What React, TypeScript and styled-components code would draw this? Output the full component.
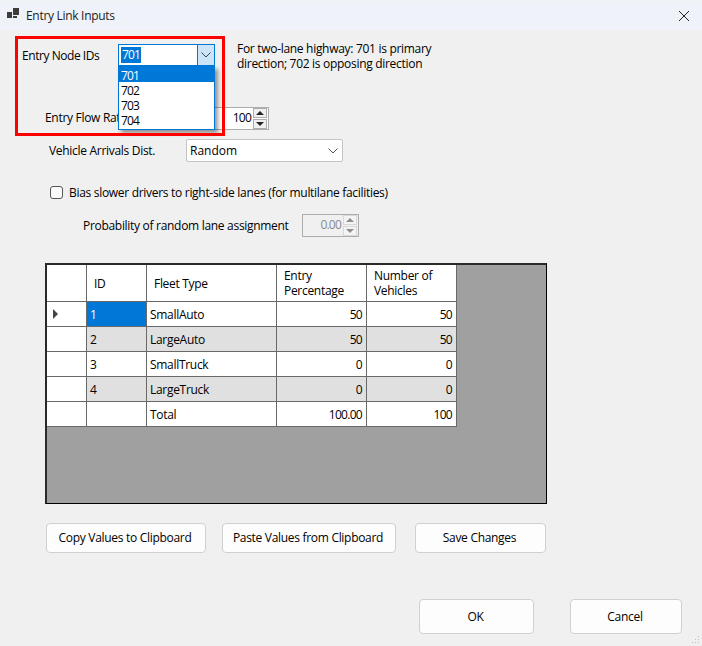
import styled, { createGlobalStyle } from "styled-components";

const rows = [
  { id: "1", type: "SmallAuto", pct: "50", num: "50" },
  { id: "2", type: "LargeAuto", pct: "50", num: "50" },
  { id: "3", type: "SmallTruck", pct: "0", num: "0" },
  { id: "4", type: "LargeTruck", pct: "0", num: "0" },
  { id: "", type: "Total", pct: "100.00", num: "100" },
];

export default function App() {
  return (
    <>
      <GlobalStyle />
      <Dialog>
        <TitleBar>
          <AppIcon viewBox="0 0 12 10">
            <rect x="0" y="4" width="5" height="6" fill="#3c3c3c" />
            <rect x="6" y="0" width="6" height="7" fill="#3c3c3c" />
            <rect x="6" y="8" width="4" height="2" fill="#3c3c3c" />
          </AppIcon>
          <TitleText>Entry Link Inputs</TitleText>
          <CloseIcon viewBox="0 0 12 12">
            <path d="M1 1 L11 11 M11 1 L1 11" stroke="#222" strokeWidth="1" fill="none" />
          </CloseIcon>
        </TitleBar>

        <Body>
          <NodeRow>
            <NodeLabel>Entry Node IDs</NodeLabel>
            <ComboWrap>
              <Combo>
                <ComboValue>
                  <Selected>701</Selected>
                </ComboValue>
                <ComboButton>
                  <Chevron viewBox="0 0 10 6">
                    <path d="M0.5 0.5 L5 5 L9.5 0.5" stroke="#444" fill="none" />
                  </Chevron>
                </ComboButton>
              </Combo>
              <DropList>
                <DropItem $active>701</DropItem>
                <DropItem>702</DropItem>
                <DropItem>703</DropItem>
                <DropItem>704</DropItem>
              </DropList>
            </ComboWrap>
            <HelpText>
              For two-lane highway: 701 is primary
              <br />
              direction; 702 is opposing direction
            </HelpText>
          </NodeRow>

          <FlowRow>
            <FlowLabel $indent={45}>Entry Flow Rate</FlowLabel>
            <Spinner $width={83}>
              <SpinValue>100</SpinValue>
              <SpinButtons />
            </Spinner>
          </FlowRow>

          <ArrivalRow>
            <FieldLabel $indent={49}>Vehicle Arrivals Dist.</FieldLabel>
            <Select>
              <span>Random</span>
              <Chevron viewBox="0 0 10 6">
                <path d="M0.5 0.5 L5 5 L9.5 0.5" stroke="#555" fill="none" />
              </Chevron>
            </Select>
          </ArrivalRow>

          <CheckRow>
            <CheckBox />
            <span>Bias slower drivers to right-side lanes (for multilane facilities)</span>
          </CheckRow>

          <ProbRow>
            <span>Probability of random lane assignment</span>
            <Spinner $width={57} $disabled>
              <SpinValue>0.00</SpinValue>
              <SpinButtons $disabled />
            </Spinner>
          </ProbRow>

          <Grid>
            <Table>
              <colgroup>
                <col width={40} />
                <col width={60} />
                <col width={130} />
                <col width={90} />
                <col width={90} />
              </colgroup>
              <thead>
                <tr>
                  <HeadCell />
                  <HeadCell>ID</HeadCell>
                  <HeadCell>Fleet Type</HeadCell>
                  <HeadCell>
                    Entry
                    <br />
                    Percentage
                  </HeadCell>
                  <HeadCell>
                    Number of
                    <br />
                    Vehicles
                  </HeadCell>
                </tr>
              </thead>
              <tbody>
                {rows.map((r, i) => (
                  <BodyRow key={r.type} $alt={i % 2 === 1}>
                    <RowHeader>{i === 0 && <RowArrow />}</RowHeader>
                    <Cell $current={i === 0}>{r.id}</Cell>
                    <Cell>{r.type}</Cell>
                    <NumCell>{r.pct}</NumCell>
                    <NumCell>{r.num}</NumCell>
                  </BodyRow>
                ))}
              </tbody>
            </Table>
          </Grid>

          <ButtonRow>
            <Button $width={160}>Copy Values to Clipboard</Button>
            <Button $width={174}>Paste Values from Clipboard</Button>
            <SaveButton $width={131}>Save Changes</SaveButton>
          </ButtonRow>

          <Footer>
            <FooterButton $width={115}>OK</FooterButton>
            <FooterButton $width={112}>Cancel</FooterButton>
          </Footer>

          <RedBox />
          <Grip viewBox="0 0 8 8">
            <g fill="#bdbdbd">
              <rect x="6" y="0" width="1" height="1" />
              <rect x="3" y="3" width="1" height="1" />
              <rect x="6" y="3" width="1" height="1" />
              <rect x="0" y="6" width="1" height="1" />
              <rect x="3" y="6" width="1" height="1" />
              <rect x="6" y="6" width="1" height="1" />
            </g>
          </Grip>
        </Body>
      </Dialog>
    </>
  );
}

function SpinButtons({ $disabled }: { $disabled?: boolean }) {
  return (
    <SpinColumn>
      <SpinButton $disabled={$disabled}>
        <SpinUp $disabled={$disabled} />
      </SpinButton>
      <SpinButton $disabled={$disabled}>
        <SpinDown $disabled={$disabled} />
      </SpinButton>
    </SpinColumn>
  );
}

const GlobalStyle = createGlobalStyle`
  html, body {
    margin: 0;
    padding: 0;
    background: #f0f0f0;
  }
  body {
    font-family: "Open Sans", "Noto Sans", sans-serif;
    font-size: 12px;
    letter-spacing: -0.3px;
    color: #000;
  }
`;

const Dialog = styled.div`
  width: 702px;
  height: 646px;
  display: flex;
  flex-direction: column;
  background: #f0f0f0;
  overflow: hidden;
`;

const TitleBar = styled.div`
  height: 29px;
  margin-top: 1px;
  display: flex;
  align-items: center;
  padding: 0 12px 0 7px;
  background: #eff3f9;
  flex-shrink: 0;
`;

const AppIcon = styled.svg`
  width: 12px;
  height: 10px;
  margin-bottom: 5px;
`;

const TitleText = styled.span`
  margin-left: 7px;
  flex: 1;
  color: #222;
`;

const CloseIcon = styled.svg`
  width: 12px;
  height: 12px;
`;

const Body = styled.div`
  position: relative;
  flex: 1;
  display: flex;
  flex-direction: column;
`;

const NodeRow = styled.div`
  display: flex;
  align-items: flex-start;
  margin-top: 14px;
  height: 63px;
  padding-left: 22px;
`;

const NodeLabel = styled.span`
  width: 96px;
  line-height: 24px;
  letter-spacing: -0.45px;
`;

const ComboWrap = styled.div`
  position: relative;
  width: 97px;
  z-index: 2;
`;

const Combo = styled.div`
  display: flex;
  height: 22px;
  border: 1px solid #0078d7;
  background: #fff;
  box-sizing: border-box;
`;

const ComboValue = styled.div`
  flex: 1;
  padding: 2px;
  display: flex;
`;

const Selected = styled.span`
  background: #0078d7;
  color: #fff;
  line-height: 16px;
  height: 16px;
  padding: 0 1px;
  letter-spacing: -0.8px;
`;

const ComboButton = styled.div`
  width: 16px;
  background: #cce4f7;
  border-left: 1px solid #0078d7;
  display: flex;
  align-items: center;
  justify-content: center;
`;

const Chevron = styled.svg`
  width: 10px;
  height: 6px;
`;

const DropList = styled.div`
  position: absolute;
  top: 22px;
  left: 0;
  width: 97px;
  height: 64px;
  box-sizing: border-box;
  background: #fff;
  border: 1px solid #0078d7;
  box-shadow: 3px 3px 4px rgba(0, 0, 0, 0.4);
`;

const DropItem = styled.div<{ $active?: boolean }>`
  height: 15px;
  line-height: 18px;
  padding-left: 2px;
  letter-spacing: -0.8px;
  background: ${(p) => (p.$active ? "#0078d7" : "transparent")};
  color: ${(p) => (p.$active ? "#fff" : "#000")};
`;

const HelpText = styled.p`
  margin: -3px 0 0 22px;
  line-height: 15px;
`;

const FlowRow = styled.div`
  display: flex;
  align-items: center;
  height: 23px;
`;

const FieldLabel = styled.span<{ $indent: number }>`
  width: ${(p) => 186 - p.$indent}px;
  padding-left: ${(p) => p.$indent}px;
  box-sizing: content-box;
`;

const FlowLabel = styled(FieldLabel)`
  margin-top: -3px;
`;

const Spinner = styled.div<{ $width: number; $disabled?: boolean }>`
  width: ${(p) => p.$width}px;
  height: 23px;
  box-sizing: border-box;
  display: flex;
  align-items: center;
  justify-content: flex-end;
  padding-right: 1px;
  border: 1px solid #adadad;
  background: ${(p) => (p.$disabled ? "#f0f0f0" : "#fff")};
  color: ${(p) => (p.$disabled ? "#8a8a8a" : "#000")};
`;

const SpinValue = styled.span`
  margin: 0 2px 3px 0;
  letter-spacing: -0.8px;
`;

const SpinColumn = styled.div`
  display: flex;
  flex-direction: column;
  gap: 1px;
  width: 14px;
`;

const SpinButton = styled.div<{ $disabled?: boolean }>`
  height: 8px;
  width: 12px;
  display: flex;
  align-items: center;
  justify-content: center;
  background: ${(p) => (p.$disabled ? "#f4f4f4" : "#f0f0f0")};
  border: 1px solid ${(p) => (p.$disabled ? "#d8d8d8" : "#adadad")};
`;

const SpinUp = styled.div<{ $disabled?: boolean }>`
  width: 0;
  height: 0;
  border-left: 4px solid transparent;
  border-right: 4px solid transparent;
  border-bottom: 4px solid ${(p) => (p.$disabled ? "#8f8f8f" : "#222")};
`;

const SpinDown = styled.div<{ $disabled?: boolean }>`
  width: 0;
  height: 0;
  border-left: 4px solid transparent;
  border-right: 4px solid transparent;
  border-top: 4px solid ${(p) => (p.$disabled ? "#8f8f8f" : "#222")};
`;

const ArrivalRow = styled.div`
  display: flex;
  align-items: center;
  margin-top: 9px;
  height: 23px;
`;

const Select = styled.div`
  width: 157px;
  height: 23px;
  box-sizing: border-box;
  display: flex;
  align-items: center;
  justify-content: space-between;
  padding: 0 4px 0 3px;
  background: #fff;
  border: 1px solid #c4c4c4;
  border-radius: 2px;
  letter-spacing: 0;
`;

const CheckRow = styled.div`
  display: flex;
  align-items: center;
  margin-top: 21px;
  padding-left: 50px;
  height: 18px;
`;

const CheckBox = styled.div`
  width: 13px;
  height: 13px;
  box-sizing: border-box;
  margin-right: 6px;
  border: 1px solid #555;
  border-radius: 3px;
  background: #fbfbfb;
`;

const ProbRow = styled.div`
  display: flex;
  align-items: center;
  justify-content: space-between;
  width: 276px;
  margin-top: 13px;
  margin-left: 83px;
  height: 23px;
`;

const Grid = styled.div`
  width: 502px;
  height: 241px;
  box-sizing: border-box;
  margin: 26px 0 0 45px;
  background: #a0a0a0;
  border-style: solid;
  border-color: #2a2a2a #000 #000 #2a2a2a;
  border-width: 2px 1px 1px 2px;
`;

const Table = styled.table`
  border-collapse: separate;
  border-spacing: 0;
  table-layout: fixed;
  width: 410px;
  background: #fff;
`;

const HeadCell = styled.th`
  height: 36px;
  padding: 0 0 0 7px;
  font-weight: 400;
  text-align: left;
  line-height: 15px;
  background: #fff;
  border-right: 1px solid #696969;
  border-bottom: 1px solid #696969;
`;

const BodyRow = styled.tr<{ $alt: boolean }>`
  background: ${(p) => (p.$alt ? "#e0e0e0" : "#fff")};
`;

const RowHeader = styled.td`
  height: 24px;
  padding: 0 0 0 6px;
  background: #fff;
  border-right: 1px solid #696969;
  border-bottom: 1px solid #696969;
`;

const RowArrow = styled.div`
  width: 0;
  height: 0;
  border-top: 5px solid transparent;
  border-bottom: 5px solid transparent;
  border-left: 5px solid #444;
`;

const Cell = styled.td<{ $current?: boolean }>`
  height: 24px;
  padding: 0 0 0 3px;
  border-right: 1px solid #696969;
  border-bottom: 1px solid #696969;
  background: ${(p) => (p.$current ? "#0078d7" : "transparent")};
  color: ${(p) => (p.$current ? "#fff" : "#000")};
`;

const NumCell = styled(Cell)`
  padding: 0 4px 0 0;
  text-align: right;
  letter-spacing: -0.7px;
`;

const ButtonRow = styled.div`
  display: flex;
  gap: 16px;
  margin: 19px 0 0 46px;
`;

const Button = styled.button<{ $width: number }>`
  width: ${(p) => p.$width}px;
  height: 30px;
  padding: 0 2px 2px 0;
  font: inherit;
  letter-spacing: inherit;
  color: #000;
  background: #fdfdfd;
  border: 1px solid #d0d0d0;
  border-radius: 4px;
`;

const SaveButton = styled(Button)`
  margin-left: 3px;
`;

const Footer = styled.div`
  display: flex;
  gap: 36px;
  margin: 46px 20px 0 0;
  justify-content: flex-end;
`;

const FooterButton = styled(Button)`
  height: 35px;
  padding: 0 2px 0 0;
`;

const RedBox = styled.div`
  position: absolute;
  left: 15px;
  top: 6px;
  width: 210px;
  height: 100px;
  box-sizing: border-box;
  border: 3px solid #ff0000;
  z-index: 3;
  pointer-events: none;
`;

const Grip = styled.svg`
  position: absolute;
  right: 2px;
  bottom: 2px;
  width: 8px;
  height: 8px;
`;
